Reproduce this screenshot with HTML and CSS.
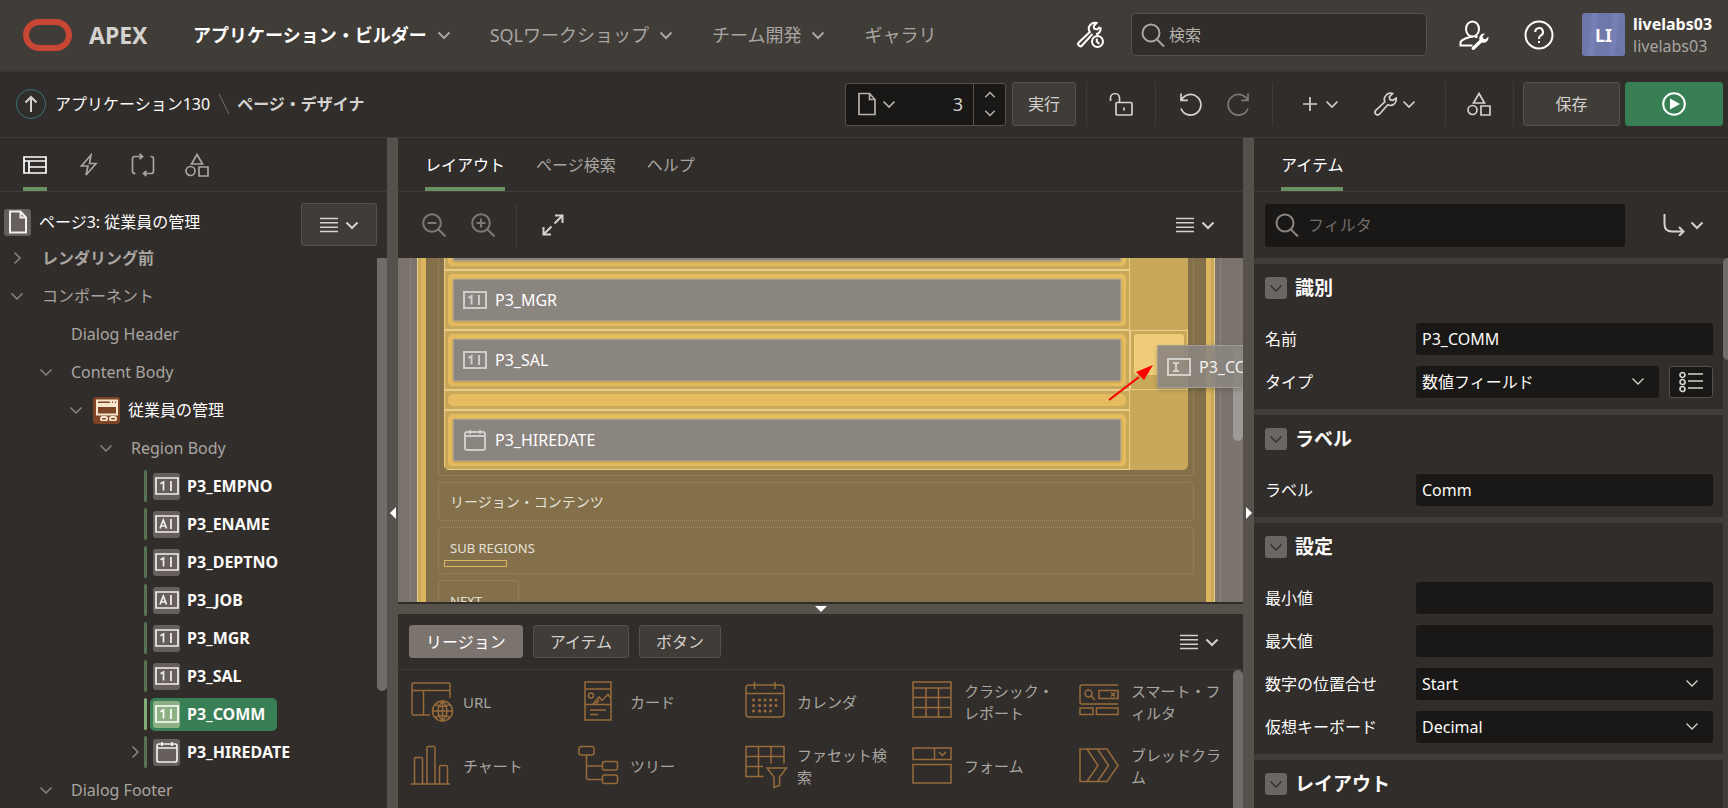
FILE: index.html
```html
<!DOCTYPE html>
<html lang="ja">
<head>
<meta charset="utf-8">
<meta name="viewport" content="width=device-width, initial-scale=1">
<title>ページ・デザイナ</title>
<link rel="stylesheet" href="styles.css">
</head>
<body>
<svg class="sprite" aria-hidden="true">
  <symbol id="i-down" viewBox="0 0 14 14"><path d="M1.5 4.5 7 10l5.500-5.500"/></symbol>
  <symbol id="i-right" viewBox="0 0 14 14"><path d="M4.500 1.500 10 7l-5.500 5.500"/></symbol>
  <symbol id="i-up" viewBox="0 0 14 14"><path d="M1.500 9.500 7 4l5.500 5.500"/></symbol>
  <symbol id="i-search" viewBox="0 0 24 24"><circle cx="10" cy="10" r="8.500"/><path d="m16 16.500 7 7"/></symbol>
  <symbol id="i-wrench" viewBox="0 0 24 24"><path d="M22.200 6.200a6 6 0 0 1-8.400 6.600L5.600 22a2.600 2.600 0 0 1-3.800-3.700l9-8.500A6.200 6.200 0 0 1 18.500 1.600l-3.200 3.400.8 2.700 2.800.6z"/></symbol>
  <symbol id="i-page" viewBox="0 0 20 24"><path d="M2 1.500h10.500l5.500 6v15H2zM12.500 1.500v6H18"/></symbol>
  <symbol id="i-shapes" viewBox="0 0 24 24"><path d="M12 1.500 17.500 11h-11z"/><circle cx="5.500" cy="18" r="4.500"/><path d="M14 14h9v9h-9z"/></symbol>
  <symbol id="i-menu" viewBox="0 0 18 16"><path d="M0 1.500h18M0 5.800h18M0 10.200h18M0 14.500h18"/></symbol>
  <symbol id="i-num" viewBox="0 0 24 18"><path d="M1 1h22v16H1zM16 4v10"/><path d="M5.500 6.800 8.500 5v8.500"/></symbol>
  <symbol id="i-txt" viewBox="0 0 24 18"><path d="M1 1h22v16H1zM16 4v10"/><path d="M5 13.500 8.300 5l3.300 8.500M6 11h4.500"/></symbol>
  <symbol id="i-input" viewBox="0 0 24 18"><path d="M1 1h22v16H1zM6 5h2q1 0 1 1v6q0 1-1 1H6M12 5h-2q-1 0-1 1v6q0 1 1 1h2"/></symbol>
  <symbol id="i-cal" viewBox="0 0 22 22"><path d="M3 3h16q2 0 2 2v14q0 2-2 2H3q-2 0-2-2V5q0-2 2-2zM1 7h20M6 1v4M16 1v4"/></symbol>
</svg>

<div class="app">
  <header class="header">
    <svg class="logo" viewBox="0 0 49 32" role="img" aria-label="Oracle"><rect x="3" y="3" width="43" height="26" rx="13"/></svg>
    <span class="brand">APEX</span>
    <nav class="nav">
      <a href="#" class="nav-link current">アプリケーション・ビルダー<svg class="icon chev"><use href="#i-down"/></svg></a>
      <a href="#" class="nav-link">SQLワークショップ<svg class="icon chev"><use href="#i-down"/></svg></a>
      <a href="#" class="nav-link">チーム開発<svg class="icon chev"><use href="#i-down"/></svg></a>
      <a href="#" class="nav-link">ギャラリ</a>
    </nav>
    <div class="header-tools">
      <button class="icon-btn" aria-label="最近の編集">
        <svg class="icon white" width="28" height="28" viewBox="0 0 28 28"><path d="M23.500 6.500a5.500 5.500 0 0 1-4.500 6.700M15.500 13 5 24.500a2 2 0 0 1-3.200-3L12.800 11A6 6 0 0 1 19.500 2l-2.800 3 .6 2.700 2.800.8 3-2.600"/><circle cx="20.500" cy="20.500" r="5.500"/><path d="M19.800 17.500v3l2.500 2.500"/></svg>
      </button>
      <label class="search">
        <svg class="icon" width="24" height="24"><use href="#i-search"/></svg>
        <input type="search" placeholder="検索" aria-label="検索">
      </label>
      <button class="icon-btn wide" aria-label="管理">
        <svg class="icon white" width="30" height="30" viewBox="0 0 30 30"><path d="M14 16.500C9 17 3 19.500 1.500 22v3.500H13.500M16 16.500l2.500.8"/><ellipse cx="13.500" cy="9" rx="6.500" ry="7.500"/><path class="solid" d="M13 27.200 20.500 20a5 5 0 0 1 5.500-6.500l-2.500 3 .8 2.200 2.400.5 2.600-2.700a5 5 0 0 1-6.500 6L15.500 29.500a1.700 1.700 0 0 1-2.500-2.300z"/></svg>
      </button>
      <button class="icon-btn wide" aria-label="ヘルプ">
        <svg class="icon white" width="30" height="30" viewBox="0 0 30 30"><circle cx="15" cy="15" r="13.500"/><path d="M11.200 12a3.900 3.900 0 1 1 5.600 3.500q-1.800 1-1.800 3v.5M15 21v2"/></svg>
      </button>
      <a href="#" class="user">
        <span class="avatar">LI</span>
        <span class="user-text"><b>livelabs03</b><span>livelabs03</span></span>
      </a>
    </div>
  </header>

  <div class="toolbar">
    <a href="#" class="up" aria-label="上へ"><svg class="icon" width="18" height="18" viewBox="0 0 18 18"><path d="M9 17V2M3.500 7.500 9 2l5.500 5.500"/></svg></a>
    <a href="#" class="crumb">アプリケーション130</a>
    <svg class="slash" viewBox="0 0 12 24"><path d="m1 2 10 20"/></svg>
    <span class="crumb-current">ページ・デザイナ</span>
    <div class="actions">
      <div class="page-picker">
        <button class="pick" aria-label="ページ・ファインダ"><svg class="icon" width="20" height="24"><use href="#i-page"/></svg><svg class="icon chev"><use href="#i-down"/></svg></button>
        <input class="page-no" type="text" value="3" aria-label="ページ番号">
        <div class="spin">
          <button aria-label="次のページ"><svg class="icon" width="12" height="12"><use href="#i-up"/></svg></button>
          <button aria-label="前のページ"><svg class="icon" width="12" height="12"><use href="#i-down"/></svg></button>
        </div>
      </div>
      <button class="btn go">実行</button>
      <div class="group lock"><button class="icon-btn" aria-label="ロック"><svg class="icon" width="24" height="24" viewBox="0 0 24 24"><path d="M1.500 9V6a4.500 4.500 0 0 1 9 0v4.500M8 10.500h14q1 0 1 1V22q0 1-1 1H8q-1 0-1-1V11.500q0-1 1-1zM15 15.500v3"/></svg></button></div>
      <div class="group history">
        <button class="icon-btn" aria-label="元に戻す"><svg class="icon" width="24" height="24" viewBox="0 0 24 24"><path d="M2 1.500v6.800h6.800M2.500 8A10.300 10.300 0 1 1 2 16.500"/></svg></button>
        <button class="icon-btn" aria-label="やり直し" disabled><svg class="icon" width="24" height="24" viewBox="0 0 24 24"><path d="M22 1.500v6.800h-6.800M21.500 8A10.300 10.300 0 1 0 22 16.500"/></svg></button>
      </div>
      <div class="group create">
        <button class="icon-btn" aria-label="作成"><svg class="icon" width="16" height="16" viewBox="0 0 16 16"><path d="M8 1v14M1 8h14"/></svg><svg class="icon chev"><use href="#i-down"/></svg></button>
        <button class="icon-btn" aria-label="ユーティリティ"><svg class="icon" width="24" height="24"><use href="#i-wrench"/></svg><svg class="icon chev"><use href="#i-down"/></svg></button>
      </div>
      <div class="group shared"><button class="icon-btn" aria-label="共有コンポーネント"><svg class="icon" width="24" height="24"><use href="#i-shapes"/></svg></button></div>
      <div class="group final">
        <button class="btn save">保存</button>
        <button class="btn run" aria-label="保存してページを実行"><svg width="24" height="24" viewBox="0 0 24 24"><circle cx="12" cy="12" r="10.800" fill="none" stroke="#fff" stroke-width="2"/><path d="m8 6.500 10 5.500-10 5.500z" fill="#fff"/></svg></button>
      </div>
    </div>
  </div>

  <main class="panes">
    <section class="pane">
      <div class="tabs icons">
        <button class="tab active" aria-label="レンダリング"><svg class="icon" width="24" height="18" viewBox="0 0 24 18"><path d="M1 1h22v16H1zM1 5h22M6 5v12M6 11h17"/></svg></button>
        <button class="tab" aria-label="動的アクション"><svg class="icon" width="24" height="24" viewBox="0 0 24 24"><path d="M14 2 4.500 13H11L9 22l10-11.500h-6.500z"/></svg></button>
        <button class="tab" aria-label="プロセス"><svg class="icon" width="24" height="24" viewBox="0 0 24 24"><path d="M4.500 20.500H4q-2.500 0-2.500-2.500V6q0-2.500 2.500-2.500h7M8.500.8l3 2.700-3 2.700M19.500 3.500h.5q2.500 0 2.500 2.500v12q0 2.500-2.500 2.500h-7M15.500 17.800l-3 2.700 3 2.700"/></svg></button>
        <button class="tab" aria-label="共有コンポーネント"><svg class="icon" width="24" height="24"><use href="#i-shapes"/></svg></button>
      </div>
      <div class="page-row">
        <div class="page-title">
          <span class="chip"><svg class="icon" width="20" height="24"><use href="#i-page"/></svg></span>
          <span>ページ3: 従業員の管理</span>
        </div>
        <button class="btn menu" aria-label="メニュー"><svg class="icon" width="18" height="16"><use href="#i-menu"/></svg><svg class="icon chev"><use href="#i-down"/></svg></button>
      </div>
      <div class="tree-wrap">
        <ul class="tree">
          <li class="l0"><svg class="icon tw"><use href="#i-right"/></svg><b class="node dim">レンダリング前</b></li>
          <li class="l0"><svg class="icon tw"><use href="#i-down"/></svg><span class="node dim">コンポーネント</span></li>
          <li class="l1"><span class="tw"></span><span class="node dim">Dialog Header</span></li>
          <li class="l1"><svg class="icon tw"><use href="#i-down"/></svg><span class="node dim">Content Body</span></li>
          <li class="l2"><svg class="icon tw"><use href="#i-down"/></svg><span class="chip region-chip"><svg class="icon" width="22" height="22" viewBox="0 0 22 22"><path d="M1 1.500h20v3.500H1zM15 1.500v3M18 1.500v3M1 7h20v8.500H1z"/><rect x="5" y="18" width="6" height="3.500" rx="1.700"/><rect x="14" y="18" width="6" height="3.500" rx="1.700"/></svg></span><span class="text">従業員の管理</span></li>
          <li class="l3"><svg class="icon tw"><use href="#i-down"/></svg><span class="node dim">Region Body</span></li>
          <li class="l4"><span class="tw"></span><a href="#" class="item"><span class="chip"><svg class="icon field"><use href="#i-num"/></svg></span>P3_EMPNO</a></li>
          <li class="l4"><span class="tw"></span><a href="#" class="item"><span class="chip"><svg class="icon field"><use href="#i-txt"/></svg></span>P3_ENAME</a></li>
          <li class="l4"><span class="tw"></span><a href="#" class="item"><span class="chip"><svg class="icon field"><use href="#i-num"/></svg></span>P3_DEPTNO</a></li>
          <li class="l4"><span class="tw"></span><a href="#" class="item"><span class="chip"><svg class="icon field"><use href="#i-txt"/></svg></span>P3_JOB</a></li>
          <li class="l4"><span class="tw"></span><a href="#" class="item"><span class="chip"><svg class="icon field"><use href="#i-num"/></svg></span>P3_MGR</a></li>
          <li class="l4"><span class="tw"></span><a href="#" class="item"><span class="chip"><svg class="icon field"><use href="#i-num"/></svg></span>P3_SAL</a></li>
          <li class="l4 selected"><span class="tw"></span><a href="#" class="item"><span class="chip"><svg class="icon field"><use href="#i-num"/></svg></span>P3_COMM</a></li>
          <li class="l4"><svg class="icon tw"><use href="#i-right"/></svg><a href="#" class="item"><span class="chip"><svg class="icon" width="22" height="22"><use href="#i-cal"/></svg></span>P3_HIREDATE</a></li>
          <li class="l1"><svg class="icon tw"><use href="#i-down"/></svg><span class="node dim">Dialog Footer</span></li>
        </ul>
        <div class="track"><div class="thumb tree-thumb"></div></div>
      </div>
    </section>

    <div class="splitter"><svg width="6" height="12" viewBox="0 0 6 12"><path d="M6 0v12L0 6z"/></svg></div>

    <section class="pane">
      <div class="tabs">
        <button class="tab active">レイアウト</button>
        <button class="tab">ページ検索</button>
        <button class="tab">ヘルプ</button>
      </div>
      <div class="layout-bar">
        <button class="icon-btn" aria-label="縮小" disabled><svg class="icon" width="24" height="24" viewBox="0 0 24 24"><circle cx="10" cy="10" r="8.800"/><path d="m16.500 16.500 7 7M5.500 10h9"/></svg></button>
        <button class="icon-btn" aria-label="拡大" disabled><svg class="icon" width="24" height="24" viewBox="0 0 24 24"><circle cx="10" cy="10" r="8.800"/><path d="m16.500 16.500 7 7M5.500 10h9M10 5.500v9"/></svg></button>
        <span class="bar-sep"></span>
        <button class="icon-btn" aria-label="展開"><svg class="icon" width="22" height="22" viewBox="0 0 22 22"><path d="M13 1.500h7.500V9M20.500 1.500 12.500 9.500M9 20.500H1.500V13M1.500 20.500l8-8"/></svg></button>
        <button class="icon-btn end" aria-label="メニュー"><svg class="icon" width="18" height="16"><use href="#i-menu"/></svg><svg class="icon chev"><use href="#i-down"/></svg></button>
      </div>
      <div class="canvas">
        <div class="frame">
          <div class="region">
            <div class="slot items">
              <div class="grid">
                <div class="grid-row"><div class="cell"><div class="drop"><div class="block"></div></div></div><div class="side"></div></div>
                <div class="grid-row"><div class="cell"><div class="drop"><div class="block"><svg class="icon field"><use href="#i-num"/></svg>P3_MGR</div></div></div><div class="side"></div></div>
                <div class="grid-row"><div class="cell"><div class="drop"><div class="block"><svg class="icon field"><use href="#i-num"/></svg>P3_SAL</div></div></div><div class="side target"><div class="highlight"></div></div></div>
                <div class="grid-row"><div class="cell"><div class="drop empty"></div></div><div class="side"></div></div>
                <div class="grid-row"><div class="cell"><div class="drop"><div class="block"><svg class="icon cal"><use href="#i-cal"/></svg>P3_HIREDATE</div></div></div><div class="side"></div></div>
              </div>
            </div>
            <div class="slot content">リージョン・コンテンツ</div>
            <div class="slot sub">SUB REGIONS<div class="sub-drop"></div></div>
            <div class="slot next">NEXT</div>
          </div>
        </div>
        <div class="canvas-thumb"></div>
        <div class="drag"><svg class="icon field"><use href="#i-input"/></svg>P3_COMM</div>
        <svg class="arrow" viewBox="0 0 48 38"><path d="M2 36 32 13" stroke="#f00" stroke-width="2.200"/><path d="M46 1 37 16 29 8z" fill="#f00"/></svg>
      </div>
      <div class="h-splitter"><svg width="12" height="6" viewBox="0 0 12 6"><path d="M0 0h12L6 6z"/></svg></div>
      <div class="gallery-bar">
        <button class="btn small on">リージョン</button>
        <button class="btn small">アイテム</button>
        <button class="btn small">ボタン</button>
        <button class="icon-btn end" aria-label="メニュー"><svg class="icon" width="18" height="16"><use href="#i-menu"/></svg><svg class="icon chev"><use href="#i-down"/></svg></button>
      </div>
      <div class="gallery-wrap">
        <ul class="gallery">
          <li><svg viewBox="0 0 42 42"><path d="M39 17V3.500Q39 2 37.500 2h-35Q1 2 1 3.500v29Q1 34 2.500 34H19M1 9.500h38M12.500 9.500V34"/><circle cx="31.500" cy="30" r="10"/><path d="M31.500 20v20M21.500 30h20M24 23.500q7.500 4 15 0M24 36.500q7.500-4 15 0M31.500 20q-9 10 0 20 9-10 0-20"/></svg><span>URL</span></li>
          <li><svg viewBox="0 0 42 42"><path d="M7 1h26v38H7zM7 8h26M7 23.500h26M12 29h16M12 33.500h8M15 23l6-7 3 3.500 6-6 3 4M18 23l3-4"/><circle cx="13" cy="14.500" r="2.500"/></svg><span>カード</span></li>
          <li><svg viewBox="0 0 42 42"><path d="M4 4h32q3 0 3 3v26q0 3-3 3H4q-3 0-3-3V7q0-3 3-3zM1 12.500h38M9.500 1v7M30 1v7"/><path class="dots" d="M8.500 19h.1m5.900 0h.1m5.400 0h.1m5.400 0h.1m5.400 0h.1M8.500 24.500h.1m5.900 0h.1m5.400 0h.1m5.400 0h.1m5.400 0h.1M8.500 30h.1m5.900 0h.1m5.400 0h.1m5.400 0h.1"/></svg><span>カレンダ</span></li>
          <li><svg viewBox="0 0 42 42"><path d="M1 1h38v35H1zM1 7h38M1 16.500h38M1 26.500h38M14 7v29M26.500 7v29"/></svg><span>クラシック・レポート</span></li>
          <li><svg viewBox="0 0 42 42"><path d="M39 4H3Q1 4 1 6v15q0 2 2 2h36M20 9.500h19v8H20zM32 11.500l4 4m0-4-4 4M1 27h13v6.500H1zM17.500 27H39v6.500H17.500zM12 15l4 4"/><circle cx="9.500" cy="12.500" r="3.500"/></svg><span>スマート・フィルタ</span></li>
          <li><svg viewBox="0 0 42 42"><path d="M0 39h39M3.500 39V14q0-1.500 1.500-1.500h5q1.500 0 1.500 1.500v25M16 39V3q0-1.500 1.500-1.500h5Q24 1.500 24 3v36M28.500 39V22q0-1.500 1.500-1.500h5q1.500 0 1.500 1.500v17"/></svg><span>チャート</span></li>
          <li><svg viewBox="0 0 42 42"><rect x="1" y="1.500" width="15" height="8.500" rx="2"/><rect x="24.500" y="16.500" width="15" height="8.500" rx="2"/><rect x="24.500" y="30" width="15" height="8.500" rx="2"/><path d="M8.500 10v22.500q0 2 2 2h14M8.500 21h16"/></svg><span>ツリー</span></li>
          <li><svg viewBox="0 0 42 42"><path d="M39 18.500V1.500H1v30h17.500M1 11.500h38M1 21.500h17M13.500 1.500v30M26 1.500v17M22 23h19.500L34.500 32v8.500l-5.500 2V32z"/></svg><span>ファセット検索</span></li>
          <li><svg viewBox="0 0 42 42"><path d="M1 3h38v11.500H1zM22.500 3v11.500M27 7l3.500 3.500L34 7M1 19.500h38V38H1z"/></svg><span>フォーム</span></li>
          <li><svg viewBox="0 0 42 42"><path d="M1 4h27l11 16.500L28 36.500H1zM8 4l11 16.500L8 36.500M18.500 4l11 16.500-11 16"/></svg><span>ブレッドクラム</span></li>
        </ul>
        <div class="track"><div class="thumb gallery-thumb"></div></div>
      </div>
    </section>

    <div class="splitter"><svg width="6" height="12" viewBox="0 0 6 12"><path d="M0 0v12l6-6z"/></svg></div>

    <section class="pane">
      <div class="tabs"><button class="tab active">アイテム</button></div>
      <div class="filter-row">
        <label class="filter"><svg class="icon" width="24" height="24"><use href="#i-search"/></svg><input type="search" placeholder="フィルタ" aria-label="フィルタ"></label>
        <button class="icon-btn" aria-label="グループへ移動"><svg class="icon" width="22" height="22" viewBox="0 0 22 22"><path d="M1.500 0v10q0 7.500 7.500 7.500h11.500M16 13l4.500 4.500L16 22"/></svg><svg class="icon chev"><use href="#i-down"/></svg></button>
      </div>
      <div class="props-wrap">
        <div class="props">
          <section class="group-box">
            <h2><button class="toggle" aria-label="識別を閉じる"><svg class="icon chev"><use href="#i-down"/></svg></button>識別</h2>
            <div class="prop"><label for="p-name">名前</label><input id="p-name" type="text" value="P3_COMM"></div>
            <div class="prop"><label for="p-type">タイプ</label><div class="control"><div class="select"><select id="p-type"><option>数値フィールド</option></select><svg class="icon chev"><use href="#i-down"/></svg></div><button class="quick" aria-label="クイック・ピック"><svg class="icon" width="24" height="22" viewBox="0 0 24 22"><circle cx="3.500" cy="4" r="2.500"/><circle cx="3.500" cy="11" r="2.500"/><circle cx="3.500" cy="18" r="2.500"/><path d="M9 3h15M9 10h15M9 17h15"/></svg></button></div></div>
          </section>
          <section class="group-box">
            <h2><button class="toggle" aria-label="ラベルを閉じる"><svg class="icon chev"><use href="#i-down"/></svg></button>ラベル</h2>
            <div class="prop"><label for="p-label">ラベル</label><input id="p-label" type="text" value="Comm"></div>
          </section>
          <section class="group-box">
            <h2><button class="toggle" aria-label="設定を閉じる"><svg class="icon chev"><use href="#i-down"/></svg></button>設定</h2>
            <div class="prop"><label for="p-min">最小値</label><input id="p-min" type="text"></div>
            <div class="prop"><label for="p-max">最大値</label><input id="p-max" type="text"></div>
            <div class="prop"><label for="p-align">数字の位置合せ</label><div class="select"><select id="p-align"><option>Start</option></select><svg class="icon chev"><use href="#i-down"/></svg></div></div>
            <div class="prop"><label for="p-kbd">仮想キーボード</label><div class="select"><select id="p-kbd"><option>Decimal</option></select><svg class="icon chev"><use href="#i-down"/></svg></div></div>
          </section>
          <section class="group-box">
            <h2><button class="toggle" aria-label="レイアウトを閉じる"><svg class="icon chev"><use href="#i-down"/></svg></button>レイアウト</h2>
          </section>
        </div>
        <div class="props-track"><div class="thumb props-thumb"></div></div>
      </div>
    </section>
  </main>
</div>
</body>
</html>
```
FILE: styles.css
```css
:root {
  --bg: #312d2a;
  --raised: #403c38;
  --line: #403c38;
  --edge: #57514c;
  --field: #1a1816;
  --text: #fcfbfa;
  --soft: #d4d2cf;
  --dim: #a8a5a2;
  --green: #387f55;
  --tab: #6b9163;
  --gold: #e5bc5f;
}

* { box-sizing: border-box; }

body {
  margin: 0;
  background: var(--bg);
  color: var(--text);
  font: 16px/22px "Noto Sans", "Noto Sans CJK JP", sans-serif;
}

button, input, select { font: inherit; color: inherit; }
button { border: 0; background: none; padding: 0; display: flex; align-items: center; justify-content: center; }
a { color: inherit; text-decoration: none; }
ul { list-style: none; margin: 0; padding: 0; }
input, select { border: 0; outline: 0; min-width: 0; appearance: none; }

.sprite { position: absolute; width: 0; height: 0; }
.icon { fill: none; stroke: currentColor; stroke-width: 2; flex: none; }
.icon.white { color: #fff; }
.icon .solid { fill: currentColor; stroke: none; }
.chev { width: 14px; height: 14px; }
.field { width: 24px; height: 18px; }

.app { height: 100vh; display: grid; grid-template-rows: 72px 66px minmax(0, 1fr); overflow: hidden; }

/* Header */
.header { display: flex; align-items: center; background: var(--raised); padding: 0 7px 2px 23px; border-bottom: 1px solid #3a3632; white-space: nowrap; }
.logo { width: 49px; height: 32px; fill: none; stroke: #c74634; stroke-width: 6; flex: none; }
.brand { width: 121px; padding-left: 17px; font-size: 23px; font-weight: 700; color: var(--soft); }
.nav { display: flex; gap: 39px; font-size: 18px; color: var(--dim); }
.nav-link { display: flex; align-items: center; gap: 10px; }
.nav-link .chev { stroke-width: 2; color: var(--dim); }
.nav-link.current { color: #fff; font-weight: 700; }
.header-tools { display: flex; align-items: center; margin-left: auto; }
.search { display: flex; align-items: center; gap: 4px; width: 296px; height: 43px; margin: 0 14px 0 26px; padding: 0 9px; background: var(--bg); border: 1px solid var(--edge); border-radius: 5px; color: var(--dim); }
.search input, .filter input { flex: 1; background: none; padding: 0; }
.search input::placeholder { color: #b5b2ae; }
.icon-btn.wide { width: 65px; }
.user { display: flex; align-items: center; gap: 8px; margin-left: 11px; }
.avatar { width: 43px; height: 43px; border-radius: 3px; display: grid; place-items: center; font-size: 18px; font-weight: 700; background: repeating-linear-gradient(96deg, #6f77ab 0 9px, #7780b6 11px 15px, #6f77ab 17px 21px); }
.user-text { display: grid; width: 88px; font-size: 16px; }
.user-text span { color: var(--dim); }

/* Page toolbar */
.toolbar { display: flex; align-items: center; padding: 0 5px 1px 16px; border-bottom: 1px solid var(--line); color: var(--soft); white-space: nowrap; }
.up { width: 30px; height: 30px; border: 1px solid #42707f; border-radius: 50%; display: grid; place-items: center; }
.crumb { margin-left: 9px; color: var(--text); }
.slash { width: 12px; height: 24px; margin: 0 7px 0 8px; stroke: #7a736e; }
.crumb-current { font-weight: 700; }
.actions { display: flex; align-items: center; margin-left: auto; height: 44px; }
.actions .icon { stroke-width: 1.700; }
.page-picker { display: flex; width: 161px; height: 43px; background: var(--field); border: 1px solid var(--edge); border-radius: 3px; }
.pick { gap: 5px; padding-left: 11px; color: #b5b2ae; }
.page-no { flex: 1; background: none; text-align: right; font-size: 18px; padding: 0 10px; }
.spin { width: 32px; border-left: 1px solid var(--edge); display: grid; padding: 2px 0; color: #b5b2ae; }
.btn { background: var(--raised); border: 1px solid var(--edge); border-radius: 3px; color: var(--soft); }
.go { width: 64px; height: 44px; margin: 0 10px 0 6px; }
.group { display: flex; align-items: center; height: 44px; border-left: 1px solid var(--raised); }
.icon-btn { color: var(--soft); gap: 5px; }
.icon-btn:disabled { color: #7d7975; }
.lock { width: 69px; padding-left: 22px; }
.history { width: 117px; padding-left: 23px; gap: 23px; }
.create { width: 173px; padding-left: 29px; gap: 35px; }
.create .icon-btn { gap: 7px; }
.create .icon-btn + .icon-btn { gap: 4px; }
.shared { width: 68px; padding-left: 21px; }
.final { padding-left: 9px; gap: 5px; }
.save { width: 97px; height: 44px; }
.run { width: 98px; height: 44px; background: var(--green); border-color: var(--green); }

/* Panes */
.panes { display: grid; grid-template-columns: 387px 11px minmax(0, 1fr) 11px 474px; min-height: 0; }
.pane { display: flex; flex-direction: column; min-width: 0; min-height: 0; }
.splitter { background: var(--edge); display: flex; justify-content: center; padding-top: 369px; }
.splitter svg, .h-splitter svg { fill: #fff; flex: none; }
.tabs { display: flex; gap: 31px; height: 54px; flex: none; padding: 0 27px; border-bottom: 1px solid var(--line); }
.tab { color: var(--dim); border-bottom: 4px solid transparent; padding-top: 4px; white-space: nowrap; }
.tab.active { color: #fff; border-color: var(--tab); }
.tabs.icons { padding: 0 23px; gap: 30px; }
.tabs.icons .icon { stroke-width: 1.700; }

.page-row { display: flex; flex: none; height: 60px; padding: 11px 10px 0 4px; }
.page-title { display: flex; align-items: center; gap: 8px; height: 38px; }
.chip { width: 27px; height: 27px; border-radius: 3px; background: #665f5b; display: grid; place-items: center; flex: none; color: #f1efed; }
.menu { width: 76px; height: 43px; margin-left: auto; gap: 7px; }
.menu .icon, .end .icon { stroke-width: 1.600; }
.tree-wrap { display: flex; flex: 1; min-height: 0; margin-top: -13px; overflow: hidden; }
.tree { flex: 1; min-width: 0; }
.tree li { display: flex; align-items: center; height: 38px; white-space: nowrap; }
.l0 { padding-left: 10px; }
.l1 { padding-left: 39px; }
.l2 { padding-left: 69px; }
.l3 { padding-left: 99px; }
.l4 { padding-left: 128px; }
.tw { width: 14px; height: 14px; flex: none; color: #8a8581; stroke-width: 1.500; }
.node { margin-left: 18px; }
.dim { color: var(--dim); }
.region-chip { margin-left: 10px; background: #7d4526; color: #f6e6cd; }
.region-chip + .text { margin-left: 8px; }
.item { display: flex; align-items: center; gap: 7px; height: 33px; margin-left: 8px; padding: 0 12px 0 3px; font-weight: 700; border-radius: 5px; position: relative; }
.item::before { content: ""; position: absolute; left: -6px; top: 0; width: 3px; height: 32px; border-radius: 2px; background: #587353; }
.item .field, .item .icon { stroke-width: 1.700; }
.selected .item { background: var(--green); }
.selected .item::before { background: #7fae76; }
.selected .chip { background: #8db085; color: #fff; }
.track { width: 10px; flex: none; padding-top: 19px; }
.thumb { background: #6f6d69; }
.tree-thumb { height: 433px; border-radius: 0 0 5px 5px; }

/* Layout editor */
.layout-bar { display: flex; align-items: center; flex: none; height: 66px; padding: 0 28px 0 24px; }
.layout-bar .icon-btn + .icon-btn:not(.end) { margin-left: 25px; }
.bar-sep { width: 1px; height: 43px; margin: 0 25px 0 21px; background: var(--raised); }
.icon-btn.end { margin-left: auto; gap: 7px; }
.layout-bar .end .chev, .gallery-bar .end .chev, .menu .chev { stroke-width: 2; }
.canvas { position: relative; flex: 1; min-height: 0; overflow: hidden; background: #7b736e; padding: 0 22px 0 12px; border-bottom: 2px solid var(--bg); }
.frame { border: dotted #9b948f; border-width: 0 1px; padding: 0 5px 0 6px; min-height: 100%; }
.region {
  border: solid #ecd08a;
  border-width: 0 1px;
  padding: 0 20px;
  background: #83704a;
  box-shadow: inset 3px 0 #c8a95a, inset -3px 0 #c8a95a, inset 8px 0 #ddb55c, inset -8px 0 #ddb55c;
  overflow: hidden;
}
.slot { border: 1px dotted #9c8c6b; border-radius: 3px; padding: 0 11px; margin-bottom: 6px; color: #e6e1d8; font-size: 14px; }
.slot.items { margin-top: -54px; padding: 5px; }
.grid { overflow: hidden; border-radius: 0 0 5px 5px; background: #c8a959; }
.grid-row { display: flex; }
.cell { flex: 1; min-width: 0; padding: 3px; border: 1px solid #e9cd88; }
.drop { padding: 5px; border-radius: 5px; background: var(--gold); }
.drop.empty { height: 12px; padding: 0; }
.block { display: flex; align-items: center; gap: 8px; height: 42px; padding: 0 9px; border: 1px solid #a39d97; background: #8b8580; color: #fff; font-size: 16px; box-shadow: 0 1px 3px #0003; }
.block .icon { color: #cfccc9; }
.cal { width: 24px; height: 22px; }
.side { width: 58px; flex: none; padding: 3px; }
.target { border: 1px solid #e9cd88; }
.highlight { height: 41px; border-radius: 3px; background: #efcd78; }
.content { height: 39px; line-height: 37px; }
.sub, .next { height: 47px; padding-top: 12px; font-size: 13px; line-height: 16px; }
.sub-drop { width: 63px; height: 7px; margin: 4px 0 0 -6px; border: 1px solid #d9b463; }
.next { width: 81px; }
.canvas-thumb { position: absolute; right: 0; top: 90px; width: 10px; height: 93px; border-radius: 0 0 5px 5px; background: #a09a96; }
.drag { position: absolute; right: 0; top: 87px; width: 86px; height: 43px; overflow: hidden; display: flex; align-items: center; gap: 8px; padding-left: 9px; border: solid #a39d97; border-width: 1px 0 1px 1px; background: #8b8580e6; color: #f3f1ef; box-shadow: 0 2px 5px #0003; }
.drag .icon { color: #d3cfcb; }
.arrow { position: absolute; right: 88px; top: 106px; width: 48px; height: 38px; }

.h-splitter { height: 10px; flex: none; background: var(--edge); display: grid; place-items: center; }
.gallery-bar { display: flex; align-items: center; flex: none; height: 56px; padding: 0 24px 0 11px; border-bottom: 1px solid var(--line); }
.small { height: 33px; padding: 0 16px; margin-right: 10px; }
.small.on { background: #7b736e; border-color: #7b736e; color: #fff; }
.gallery-wrap { display: flex; height: 138px; flex: none; }
.gallery { flex: 1; display: grid; grid-template-columns: repeat(5, 1fr); grid-auto-rows: 64px; font-size: 15px; color: var(--dim); }
.gallery li { display: flex; align-items: center; padding-left: 13px; gap: 10px; }
.gallery svg { width: 42px; height: 42px; flex: none; fill: none; stroke: #976b3b; stroke-width: 1.500; overflow: visible; }
.gallery .dots { stroke-width: 3; stroke-linecap: round; }
.gallery span { width: 96px; }
.gallery-wrap .track { padding: 0; }
.gallery-thumb { height: 100%; border-radius: 5px 5px 0 0; }

/* Property editor */
.filter-row { display: flex; align-items: center; flex: none; height: 66px; padding: 0 24px 0 11px; }
.filter { flex: 1; display: flex; align-items: center; gap: 9px; height: 43px; margin-right: 38px; padding: 0 10px; border-radius: 3px; background: var(--field); color: #8a8581; }
.filter input::placeholder { color: #706c69; }
.props-wrap { display: flex; flex: 1; min-height: 0; overflow: hidden; }
.props { flex: 1; min-width: 0; }
.group-box { border-top: 6px solid var(--raised); padding: 13px 10px 11px 11px; }
.group-box h2 { display: flex; align-items: center; gap: 8px; height: 22px; margin: 0 0 24px; font-size: 19px; line-height: 22px; }
.toggle { width: 22px; height: 22px; border-radius: 3px; background: #6b6662; color: var(--bg); }
.toggle .chev, .select .chev { stroke-width: 1.300; }
.prop { display: grid; grid-template-columns: 151px minmax(0, 1fr); align-items: center; height: 32px; }
.prop + .prop { margin-top: 11px; }
.prop input, .prop select { width: 100%; height: 32px; padding: 0 6px; border-radius: 3px; background: var(--field); }
.control { display: flex; gap: 10px; }
.select { position: relative; flex: 1; }
.select .chev { position: absolute; right: 14px; top: 8px; color: var(--soft); pointer-events: none; }
.quick { width: 44px; height: 32px; border: 1px solid var(--edge); border-radius: 3px; background: var(--field); color: var(--soft); }
.quick .icon { stroke-width: 1.700; }
.props-track { width: 5px; flex: none; background: var(--raised); }
.props-thumb { height: 102px; border-radius: 5px 0 0 5px; }
```
